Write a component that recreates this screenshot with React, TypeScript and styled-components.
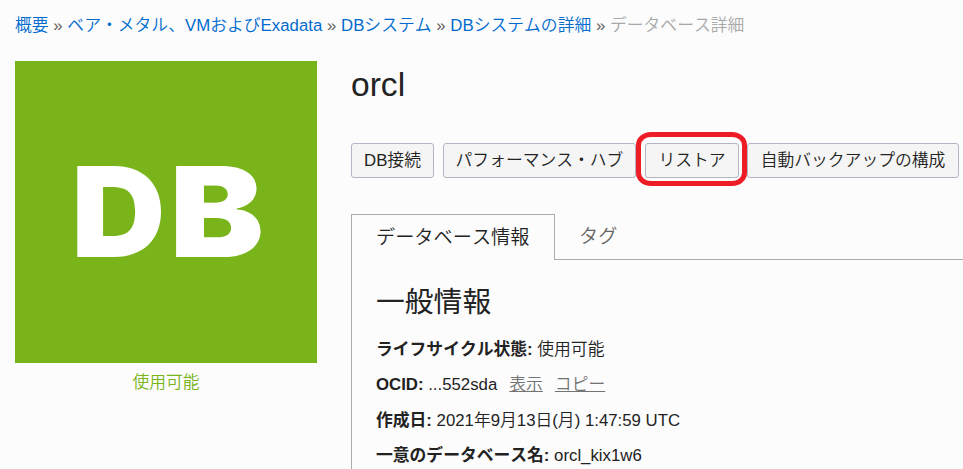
import React from "react";
import styled, { createGlobalStyle } from "styled-components";

const GlobalStyle = createGlobalStyle`
  * { box-sizing: border-box; }
  body {
    margin: 0;
    overflow: hidden;
    background: #fcfcfc;
    color: #222;
    font: 350 16.8px/24px "Liberation Sans", "Noto Sans CJK JP", sans-serif;
    white-space: nowrap;
    font-kerning: none;
  }
`;

const Page = styled.div`
  width: 963px;
  height: 469px;
  overflow: hidden;
  padding: 14px 0 0 15px;
`;

const Breadcrumbs = styled.nav`
  height: 47px;
  color: #66615c;
  letter-spacing: 0.02px;
`;

const Crumb = styled.a`
  color: #006bcf;
  text-decoration: none;
`;

const CurrentCrumb = styled.span`
  color: #a8a8a8;
`;

const Content = styled.main`
  display: grid;
  grid-template-columns: 302px 612px;
  column-gap: 34px;
`;

const Status = styled.aside`
  color: #78b41a;
  text-align: center;
`;

const Tile = styled.svg`
  display: block;
  width: 302px;
  height: 302px;
  margin-bottom: 8px;
  background: #78b41a;
  fill: #fff;
  font: 900 125px Inter, sans-serif;
`;

const Title = styled.h1`
  margin: 4px 0 0;
  height: 78px;
  font-size: 33.6px;
  font-weight: 400;
  line-height: 40px;
`;

const Actions = styled.div`
  display: flex;
  align-items: flex-start;
  gap: 9px;
  height: 71px;
`;

const Button = styled.button<{ $width: number }>`
  flex: none;
  width: ${(p) => p.$width}px;
  height: 35px;
  padding: 0;
  border: 1px solid #b3b6c2;
  border-radius: 3px;
  background: #f5f5f5;
  color: #222;
  font: inherit;
  font-kerning: none;
`;

const Highlighted = styled.div`
  position: relative;
  z-index: 1;
  flex: none;
  display: flex;
  margin-right: -1px;

  &::after {
    content: "";
    position: absolute;
    inset: -11px -8px -8px -9px;
    border: 5px solid #ee1c25;
    border-radius: 15px / 13px;
  }
`;

const Tabs = styled.div`
  display: flex;
  height: 46px;
  font-size: 19.2px;
`;

const Tab = styled.div<{ $active?: boolean }>`
  flex: ${(p) => (p.$active ? "none" : "1")};
  width: 204px;
  padding: 11px 0 0 24px;
  border: solid #ababab;
  border-width: ${(p) => (p.$active ? "1px 1px 0 1px" : "0 0 1px 0")};
  color: ${(p) => (p.$active ? "#222" : "#666")};
`;

const Panel = styled.section`
  height: 220px;
  padding: 22px 0 0 24px;
  border-left: 1px solid #ababab;
`;

const Heading = styled.h2`
  margin: 0 0 16px;
  font-size: 28.8px;
  font-weight: 400;
  line-height: 40px;
`;

const Row = styled.div`
  height: 35.4px;
`;

const Label = styled.strong`
  font-weight: 700;
`;

const TextLink = styled.a`
  margin-left: 12px;
  color: #737373;
  text-decoration: underline;
  text-decoration-thickness: 1px;
`;

const crumbs = ["概要", "ベア・メタル、VMおよびExadata", "DBシステム", "DBシステムの詳細"];

export default function App() {
  return (
    <>
      <GlobalStyle />
      <Page lang="ja">
        <Breadcrumbs>
          {crumbs.map((c) => (
            <React.Fragment key={c}>
              <Crumb>{c}</Crumb>
              {" » "}
            </React.Fragment>
          ))}
          <CurrentCrumb>データベース詳細</CurrentCrumb>
        </Breadcrumbs>
        <Content>
          <Status>
            <Tile viewBox="0 0 302 302">
              <text transform="translate(56.3 196) scale(1.043 1)">D</text>
              <text transform="translate(154.4 196) scale(1.13 1)">B</text>
            </Tile>
            使用可能
          </Status>
          <div>
            <Title>orcl</Title>
            <Actions>
              <Button $width={83}>DB接続</Button>
              <Button $width={193}>パフォーマンス・ハブ</Button>
              <Highlighted>
                <Button $width={94}>リストア</Button>
              </Highlighted>
              <Button $width={212}>自動バックアップの構成</Button>
            </Actions>
            <Tabs>
              <Tab $active>データベース情報</Tab>
              <Tab>タグ</Tab>
            </Tabs>
            <Panel>
              <Heading>一般情報</Heading>
              <Row><Label>ライフサイクル状態:</Label> 使用可能</Row>
              <Row>
                <Label>OCID:</Label> ...552sda
                <TextLink>表示</TextLink>
                <TextLink>コピー</TextLink>
              </Row>
              <Row><Label>作成日:</Label> 2021年9月13日(月) 1:47:59 UTC</Row>
              <Row><Label>一意のデータベース名:</Label> orcl_kix1w6</Row>
            </Panel>
          </div>
        </Content>
      </Page>
    </>
  );
}
